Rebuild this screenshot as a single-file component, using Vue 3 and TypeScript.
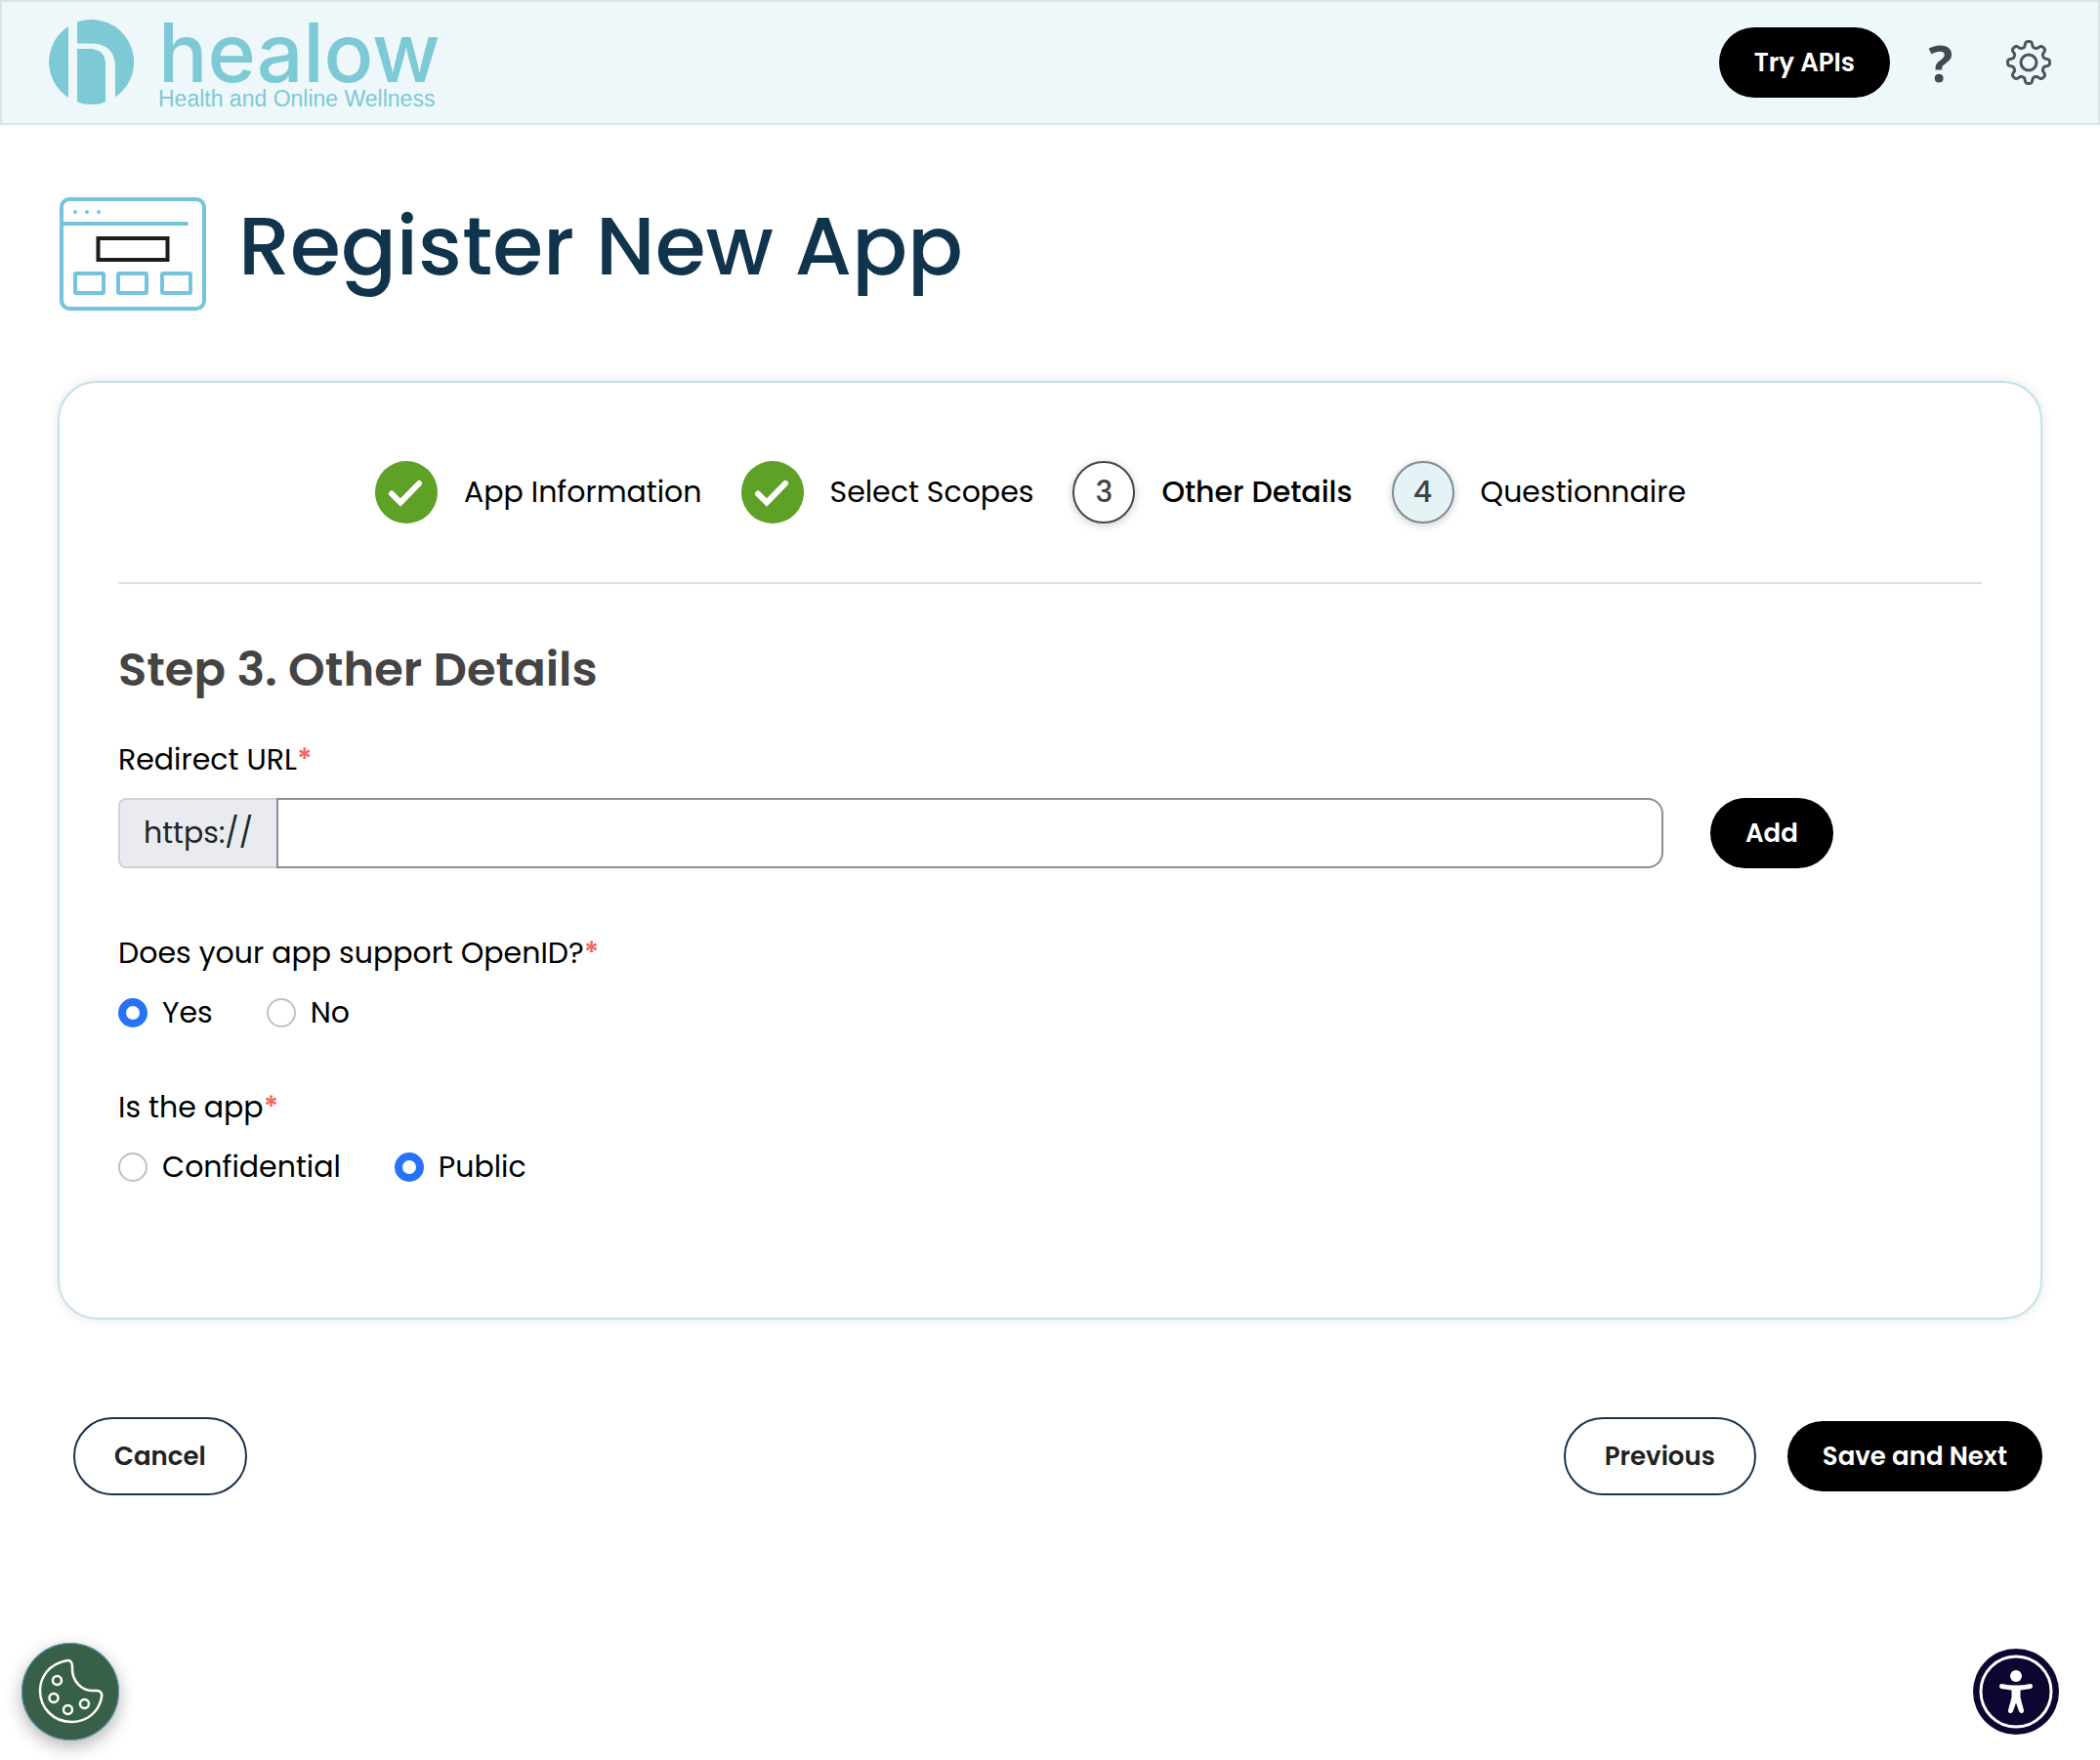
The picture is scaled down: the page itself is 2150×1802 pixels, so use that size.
<script setup lang="ts">
import { ref } from 'vue'

interface Step {
  number: number
  label: string
  state: 'done' | 'current' | 'upcoming'
}

interface RadioQuestion {
  name: string
  legend: string
  options: string[]
}

const steps: Step[] = [
  { number: 1, label: 'App Information', state: 'done' },
  { number: 2, label: 'Select Scopes', state: 'done' },
  { number: 3, label: 'Other Details', state: 'current' },
  { number: 4, label: 'Questionnaire', state: 'upcoming' },
]

const questions: RadioQuestion[] = [
  { name: 'openid', legend: 'Does your app support OpenID?', options: ['Yes', 'No'] },
  { name: 'visibility', legend: 'Is the app', options: ['Confidential', 'Public'] },
]

const redirectUrl = ref('')
const answers = ref<Record<string, string>>({ openid: 'Yes', visibility: 'Public' })

// Outline of an eight-toothed gear with rounded teeth, centred on (23, 23).
function gearOutline(): string {
  const points: string[] = []
  for (let degree = 0; degree < 360; degree += 2) {
    const angle = (degree * Math.PI) / 180
    const radius = 18.8 + 2.8 * Math.tanh(2 * Math.cos(8 * angle))
    const x = 23 + radius * Math.cos(angle)
    const y = 23 + radius * Math.sin(angle)
    points.push(`${x.toFixed(2)} ${y.toFixed(2)}`)
  }
  return `M${points.join('L')}Z`
}

const gearPath = gearOutline()
</script>

<template>
  <div class="page">
    <header class="topbar">
      <a class="brand" href="#" aria-label="healow home">
        <svg class="brand-mark" viewBox="0 0 88 88" aria-hidden="true">
          <path d="M20 7A43.500 43.500 0 0 0 20 80Z" />
          <path d="M29 2.500A43.500 43.500 0 0 1 68 79.500V46Q66 26 46 24.500H29Z" />
          <path d="M29 30H43Q58 31 58 46V84.500A43.500 43.500 0 0 1 29 84.500Z" />
        </svg>
        <span class="brand-text">
          <span class="brand-name">healow</span>
          <span class="brand-tagline">Health and Online Wellness</span>
        </span>
      </a>
      <nav class="actions">
        <button type="button" class="btn btn-solid">Try APIs</button>
        <button type="button" class="icon-btn help" aria-label="Help">?</button>
        <button type="button" class="icon-btn gear" aria-label="Settings">
          <svg viewBox="0 0 46 46" aria-hidden="true">
            <path :d="gearPath" />
            <circle cx="23" cy="23" r="8" />
          </svg>
        </button>
      </nav>
    </header>

    <main class="content">
      <div class="title-row">
        <svg class="title-icon" viewBox="0 0 150 116" aria-hidden="true">
          <g fill="none" stroke="#76c3dc" stroke-width="4">
            <rect x="2" y="2" width="146" height="112" rx="8" />
            <path d="M3 27H130" stroke-linecap="round" />
            <rect x="16" y="78" width="29" height="20" rx="1" />
            <rect x="60" y="78" width="29" height="20" rx="1" />
            <rect x="105" y="78" width="29" height="20" rx="1" />
          </g>
          <g fill="#76c3dc">
            <circle cx="16" cy="15" r="2" />
            <circle cx="28" cy="15" r="2" />
            <circle cx="40" cy="15" r="2" />
          </g>
          <rect x="39.500" y="42" width="71" height="22" fill="none" stroke="#1b1d1f" stroke-width="4" />
        </svg>
        <h1>Register New App</h1>
      </div>

      <form @submit.prevent>
        <section class="card">
          <ol class="steps">
            <li v-for="step in steps" :key="step.number" class="step" :class="step.state">
              <span class="bubble">
                <svg v-if="step.state === 'done'" viewBox="0 0 64 64" aria-hidden="true">
                  <path d="M17 33.500L26 42.500L45 23" />
                </svg>
                <template v-else>{{ step.number }}</template>
              </span>
              <span>{{ step.label }}</span>
            </li>
          </ol>

          <h2>Step 3. Other Details</h2>

          <label class="field-label" for="redirect-url">Redirect URL<span class="required">*</span></label>
          <div class="url-row">
            <div class="url-group">
              <span class="prefix">https://</span>
              <input id="redirect-url" v-model="redirectUrl" class="url-input" type="text" />
            </div>
            <button type="button" class="btn btn-solid">Add</button>
          </div>

          <fieldset v-for="question in questions" :key="question.name" class="question">
            <legend class="field-label">{{ question.legend }}<span class="required">*</span></legend>
            <div class="options">
              <label v-for="option in question.options" :key="option" class="option">
                <input v-model="answers[question.name]" type="radio" :name="question.name" :value="option" />
                {{ option }}
              </label>
            </div>
          </fieldset>
        </section>

        <div class="form-actions">
          <button type="button" class="btn btn-outline">Cancel</button>
          <div class="form-actions-end">
            <button type="button" class="btn btn-outline">Previous</button>
            <button type="submit" class="btn btn-solid">Save and Next</button>
          </div>
        </div>
      </form>
    </main>

    <button type="button" class="float cookie" aria-label="Cookie preferences">
      <svg viewBox="0 0 100 100" aria-hidden="true">
        <path
          d="M45 18.500C49 17 52 19 52 24C51 40 62 50 76 49C81 48.500 83 52 82 56C79 71 67 81 51 81C33 81 19 67 19 49C19 34 29 22 45 18.500Z"
        />
        <circle cx="36.500" cy="38.500" r="4.500" />
        <circle cx="33" cy="56.500" r="4.500" />
        <circle cx="47.500" cy="68.500" r="4.500" />
        <circle cx="64.500" cy="62.500" r="4.500" />
      </svg>
    </button>

    <button type="button" class="float accessibility" aria-label="Accessibility options">
      <svg viewBox="0 0 88 88" aria-hidden="true">
        <circle cx="44" cy="44" r="44" fill="#0c0730" />
        <circle cx="44" cy="44" r="36" fill="none" stroke="#fff" stroke-width="3" />
        <circle cx="44" cy="28" r="6" fill="#fff" />
        <path
          d="M29 36Q44 39 59 36Q61 36 61 38.500Q61 40.500 59 41L48.500 42.500V50L52 63Q52 66 50 66Q48 66.500 47 64L44 55.500L41 64Q40 66.500 38 66Q35.500 65.500 36 63L39.500 50V42.500L29 41Q27 40.500 27 38.500Q27 36 29 36Z"
          fill="#fff"
        />
      </svg>
    </button>
  </div>
</template>

<style>
body {
  background: #fff;
}
</style>

<style scoped>
* {
  box-sizing: border-box;
}

.page {
  min-height: 100vh;
  font-family: Poppins, Inter, 'Open Sans', sans-serif;
  font-size: 30px;
  line-height: 40px;
  color: #000;
}

button {
  font: inherit;
  cursor: pointer;
}

.topbar {
  display: flex;
  align-items: center;
  justify-content: space-between;
  height: 128px;
  padding: 0 48px;
  background: #eef8fb;
  border: 2px solid #dbe3e5;
}

.brand {
  display: flex;
  align-items: center;
  gap: 24px;
  color: #7dc9d6;
  text-decoration: none;
}

.brand-mark {
  width: 88px;
  height: 88px;
  fill: #7dc9d6;
}

.brand-text {
  display: flex;
  flex-direction: column;
}

.brand-name {
  font-family: Inter, 'Open Sans', sans-serif;
  font-size: 84px;
  font-weight: 500;
  line-height: 74px;
}

.brand-tagline {
  font-family: 'Liberation Sans', Arial, sans-serif;
  font-size: 23px;
  line-height: 20px;
}

.actions {
  display: flex;
  align-items: center;
}

.btn {
  height: 72px;
  padding: 0 36px;
  border: 0;
  border-radius: 40px;
  font-size: 26px;
  font-weight: 600;
  white-space: nowrap;
}

.btn-solid {
  background: #000;
  color: #fff;
}

.btn-outline {
  height: 80px;
  padding: 0 40px;
  border: 2px solid #17334d;
  background: #fff;
  color: #222;
}

.icon-btn {
  padding: 0;
  border: 0;
  background: none;
  color: #444852;
}

.help {
  width: 48px;
  margin: 0 43px 0 28px;
  font-family: 'Open Sans', sans-serif;
  font-size: 52px;
  font-weight: 700;
}

.gear {
  width: 46px;
  height: 46px;
}

.gear svg {
  display: block;
  fill: none;
  stroke: #50545d;
  stroke-width: 3;
  stroke-linejoin: round;
}

.content {
  padding: 74px 59px 0;
}

.title-row {
  display: flex;
  align-items: flex-start;
  gap: 33px;
  height: 188px;
}

.title-icon {
  width: 150px;
  height: 116px;
  margin-left: 2px;
}

h1 {
  margin: 0;
  font-size: 84px;
  line-height: 100px;
  font-weight: 500;
  color: #10344c;
}

.card {
  padding: 80px 60px 134px;
  border: 2px solid #c5e0ea;
  border-radius: 40px;
  box-shadow: 0 0 12px rgba(0, 0, 0, 0.1);
}

.steps {
  display: flex;
  justify-content: center;
  margin: 0;
  padding: 0 0 60px;
  border-bottom: 2px solid #dcdedf;
  list-style: none;
}

.step {
  display: flex;
  align-items: center;
  gap: 27px;
  margin-right: 40px;
}

.bubble {
  display: flex;
  align-items: center;
  justify-content: center;
  width: 64px;
  height: 64px;
  border-radius: 50%;
  color: #444;
  font-weight: 500;
}

.done .bubble {
  background: #5fa026;
}

.bubble svg {
  width: 64px;
  height: 64px;
  fill: none;
  stroke: #fff;
  stroke-width: 6;
  stroke-linecap: round;
}

.current {
  font-weight: 500;
}

.current .bubble {
  border: 2px solid #444;
  box-shadow: 0 2px 10px rgba(0, 0, 0, 0.2);
}

.upcoming .bubble {
  border: 2px solid #7d8b9a;
  background: #e5f3f7;
  box-shadow: 0 2px 10px rgba(0, 0, 0, 0.2);
}

h2 {
  margin: 56px 0 40px;
  font-size: 48px;
  line-height: 64px;
  font-weight: 600;
  color: #444;
}

.field-label {
  display: block;
  padding: 0;
}

.required {
  color: #ec6a60;
  font-weight: 600;
}

.url-row {
  display: flex;
  gap: 48px;
  margin: 19px 0 67px;
}

.url-group {
  display: flex;
  width: calc(100% - 326px);
  height: 72px;
}

.prefix {
  display: flex;
  align-items: center;
  padding: 0 24px;
  border: 2px solid #d0d2d9;
  border-right: 0;
  border-radius: 8px 0 0 8px;
  background: #e9ebf0;
  color: #212529;
}

.url-input {
  flex: 1;
  min-width: 0;
  padding: 0 20px;
  border: 2px solid #8a8f9c;
  border-radius: 0 16px 16px 0;
  background: #fff;
  font: inherit;
}

.question {
  margin: 0;
  padding: 0;
  border: 0;
}

.question + .question {
  margin-top: 57px;
}

.options {
  display: flex;
  gap: 55px;
  padding-top: 21px;
}

.option {
  display: flex;
  align-items: center;
  gap: 15px;
}

.option input {
  width: 30px;
  height: 30px;
  margin: 0;
  appearance: none;
  border: 2px solid #c0c0c0;
  border-radius: 50%;
  background: #fff;
}

.option input:checked {
  border: 8px solid #2872f8;
}

.form-actions {
  display: flex;
  justify-content: space-between;
  padding: 100px 0 160px 16px;
}

.form-actions-end {
  display: flex;
  align-items: center;
  gap: 32px;
}

.float {
  position: fixed;
  padding: 0;
  border: 0;
  border-radius: 50%;
}

.float svg {
  display: block;
  width: 100%;
}

.cookie {
  bottom: 20px;
  left: 22px;
  width: 100px;
  height: 100px;
  background: #386048;
  box-shadow: 0 0 0 1px #5f9cc0 inset, 0 6px 18px rgba(0, 0, 0, 0.3);
}

.cookie svg {
  fill: none;
  stroke: #fff;
  stroke-width: 2.500;
}

.accessibility {
  right: 42px;
  bottom: 26px;
  width: 88px;
  height: 88px;
  background: none;
}
</style>
